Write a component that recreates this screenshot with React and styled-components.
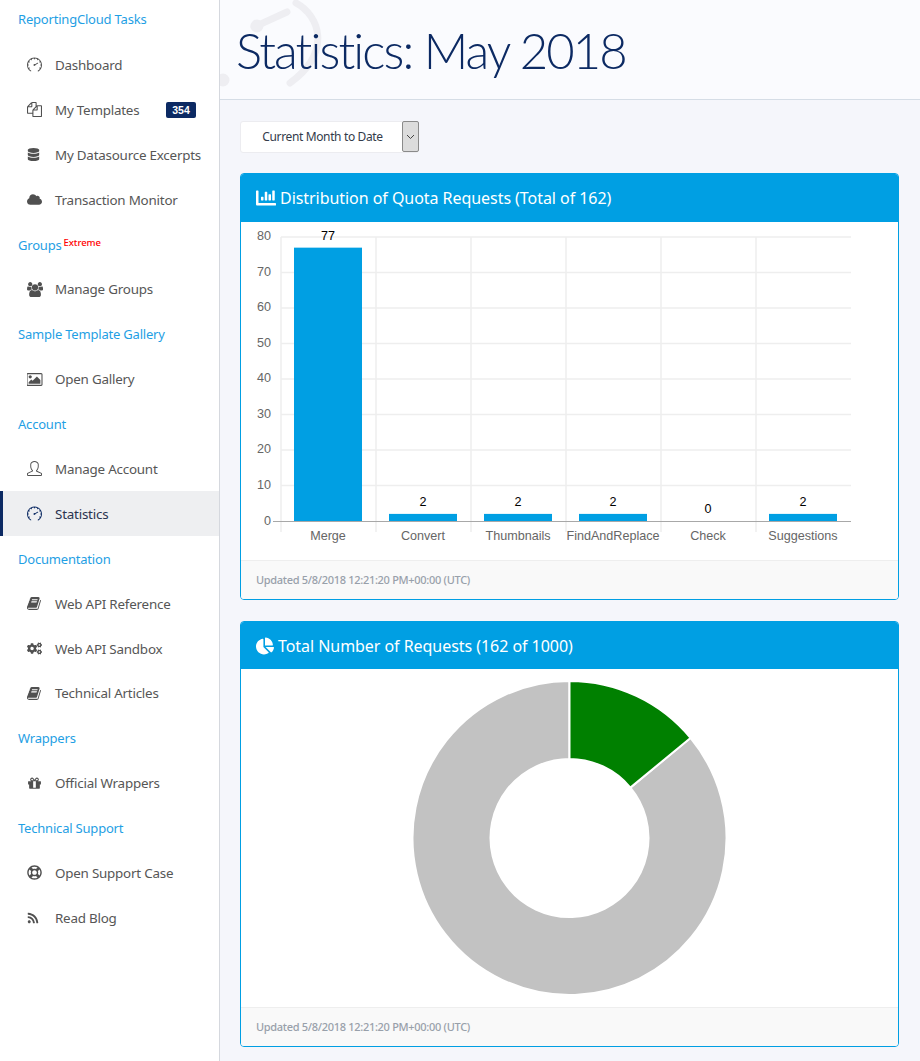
import React from "react";
import styled, { createGlobalStyle } from "styled-components";
import { FaChartBar, FaChartPie, FaCloud, FaCogs, FaDatabase, FaRegLifeRing, FaRss } from "react-icons/fa";
import { SlSpeedometer, SlUser } from "react-icons/sl";

const BODY_FONT = `"Noto Sans", "Open Sans", sans-serif`;
const CHART_FONT = `"Liberation Sans", Arial, sans-serif`;
const NAVY = "#0c2a63";
const BLUE = "#009fe3";

const GlobalStyle = createGlobalStyle`
  html, body { margin: 0; padding: 0; background: #f5f6fb; }
  body { font-family: ${BODY_FONT}; }
  * { box-sizing: border-box; }
`;

const Shell = styled.div`
  display: grid;
  grid-template-columns: 220px 1fr;
  width: 920px;
  height: 1061px;
  overflow: hidden;
`;

const Sidebar = styled.nav`
  background: #fff;
  border-right: 1px solid #d5d8de;
`;

const GroupTitle = styled.div`
  display: flex;
  align-items: center;
  height: 44.9px;
  padding-left: 18px;
  color: #1fa0e4;
  font-size: 13px;
  letter-spacing: -0.2px;
  &:first-child {
    height: 42.5px;
    padding-bottom: 4.5px;
  }
`;

const Extreme = styled.sup`
  align-self: flex-start;
  margin: 16px 0 0 2px;
  color: #ff0000;
  font-size: 9.5px;
  font-weight: 500;
  line-height: 1;
  letter-spacing: -0.05px;
`;

const NavRow = styled.a`
  display: flex;
  align-items: center;
  height: 44.9px;
  padding-left: ${(p) => (p.$active ? "24px" : "27px")};
  border-left: ${(p) => (p.$active ? `3px solid ${NAVY}` : "none")};
  background: ${(p) => (p.$active ? "#eeeff1" : "transparent")};
  color: ${(p) => (p.$active ? "#2a3450" : "#565656")};
  font-size: 13.4px;
  letter-spacing: -0.22px;
`;

const NavIcon = styled.span`
  display: flex;
  justify-content: flex-start;
  width: 28px;
  flex: none;
  font-size: 15px;
  color: ${(p) => (p.$active ? NAVY : "#505050")};
`;

const Badge = styled.span`
  margin-left: auto;
  margin-right: 23px;
  width: 30px;
  height: 16px;
  border-radius: 2px;
  background: ${NAVY};
  color: #fff;
  font-family: ${CHART_FONT};
  font-size: 10.5px;
  font-weight: 700;
  line-height: 16px;
  text-align: center;
  letter-spacing: 0;
`;

const Main = styled.main`
  min-width: 0;
`;

const PageHeader = styled.header`
  position: relative;
  height: 100px;
  padding: 19px 0 0 16px;
  background: #fafbfe;
  border-bottom: 1px solid #d5dde6;
  overflow: hidden;
`;

const Watermark = styled.svg`
  position: absolute;
  left: 0;
  top: 0;
`;

const PageTitle = styled.h1`
  position: relative;
  margin: 0;
  color: ${NAVY};
  font-family: "Lato", ${BODY_FONT};
  font-size: 49px;
  font-weight: 300;
  line-height: 62px;
  letter-spacing: -1.9px;
`;

const Content = styled.div`
  display: flex;
  flex-direction: column;
  padding: 21px 20px 0;
`;

const Picker = styled.div`
  display: flex;
  align-items: center;
  align-self: flex-start;
  width: 179px;
  height: 32px;
  margin-bottom: 20px;
  background: #fff;
  border: 1px solid #ececf0;
  border-radius: 3px;
  color: #333b4a;
  font-size: 12px;
  letter-spacing: -0.37px;
`;

const PickerText = styled.span`
  flex: 1;
  padding: 0 0 2px 2px;
  text-align: center;
`;

const PickerArrow = styled.span`
  display: flex;
  align-items: center;
  justify-content: center;
  align-self: flex-start;
  width: 17px;
  height: 31px;
  margin: -1px -1px 0 0;
  background: #dcdcdc;
  border: 1px solid #8a8a8a;
  border-radius: 2px;
`;

const Card = styled.section`
  display: flex;
  flex-direction: column;
  width: 659px;
  height: ${(p) => p.$height}px;
  margin-bottom: 21px;
  background: #fff;
  border: 1px solid ${BLUE};
  border-radius: 4px;
  overflow: hidden;
`;

const CardHead = styled.h2`
  display: flex;
  align-items: center;
  gap: 4px;
  flex: none;
  height: ${(p) => p.$height}px;
  margin: 0;
  padding-left: 15px;
  background: ${BLUE};
  color: #fff;
  font-size: 16px;
  font-weight: 400;
  letter-spacing: -0.05px;
`;

const CardBody = styled.div`
  flex: 1;
  min-height: 0;
`;

const CardFoot = styled.footer`
  flex: none;
  height: 39px;
  padding-left: 15px;
  background: #f9f9f9;
  border-top: 1px solid #eeeeee;
  color: #98a0aa;
  font-size: 11px;
  font-weight: 500;
  line-height: 38px;
  letter-spacing: -0.3px;
`;

const Glyph = ({ d, w = 1792, size = 15 }) => (
  <svg width={(size * w) / 1792} height={size} viewBox={`0 0 ${w} 1792`} fill="currentColor">
    <path d={d} />
  </svg>
);

const BOOK = "M1639 478q40 57 18 129l-275 906q-19 64-76.5 107.5t-122.5 43.5h-923q-77 0-148.5-53.5t-99.5-131.5q-24-67-2-127 0-4 3-27t4-37q1-8-3-21.5t-3-19.5q2-11 8-21t16.5-23.5 16.5-23.5q23-38 45-91.5t30-91.5q3-10 .5-30t-.5-28q3-11 17-28t17-23q21-36 42-92t25-90q1-9-2.5-32t.5-28q4-13 22-30.5t22-22.5q19-26 42.5-84.5t27.5-96.5q1-8-3-25.5t-2-26.5q2-8 9-18t18-23 17-21q8-12 16.5-30.5t15-35 16-36 19.5-32 26.5-23.5 36-11.5 47.5 5.5l-1 3q38-9 51-9h761q74 0 114 56t18 130l-274 906q-36 119-71.5 153.5t-128.5 34.5h-869q-27 0-38 15-11 16-1 43 24 70 144 70h923q29 0 56-15.5t35-41.5l300-987q7-22 5-57 38 15 59 43zm-1064 2q-4 13 2 22.5t20 9.5h608q13 0 25.5-9.5t16.5-22.5l21-64q4-13-2-22.5t-20-9.5h-608q-13 0-25.5 9.5t-16.5 22.5zm-83 256q-4 13 2 22.5t20 9.5h608q13 0 25.5-9.5t16.5-22.5l21-64q4-13-2-22.5t-20-9.5h-608q-13 0-25.5 9.5t-16.5 22.5z";
const USERS = "M593 896q-162 5-265 128h-134q-82 0-138-40.5t-56-118.5q0-353 124-353 6 0 43.5 21t97.5 42.5 119 21.5q67 0 133-23-5 37-5 66 0 139 81 256zm1071 637q0 120-73 189.5t-194 69.5h-874q-121 0-194-69.5t-73-189.5q0-53 3.5-103.5t14-109 26.5-108.5 43-97.5 62-81 85.5-53.5 111.5-20q10 0 43 21.5t73 48 107 48 135 21.5 135-21.5 107-48 73-48 43-21.5q61 0 111.5 20t85.5 53.5 62 81 43 97.5 26.5 108.5 14 109 3.5 103.5zm-1024-1277q0 106-75 181t-181 75-181-75-75-181 75-181 181-75 181 75 75 181zm704 384q0 159-112.5 271.5t-271.5 112.5-271.5-112.5-112.5-271.5 112.5-271.5 271.5-112.5 271.5 112.5 112.5 271.5zm576 225q0 78-56 118.5t-138 40.5h-134q-103-123-265-128 81-117 81-256 0-29-5-66 66 23 133 23 59 0 119-21.5t97.5-42.5 43.5-21q124 0 124 353zm-128-609q0 106-75 181t-181 75-181-75-75-181 75-181 181-75 181 75 75 181z";
const GIFT = "M1056 1356v-716h-320v716q0 25 18 38.5t46 13.5h192q28 0 46-13.5t18-38.5zm-456-844h195l-126-161q-26-31-69-31-40 0-68 28t-28 68 28 68 68 28zm688-96q0-40-28-68t-68-28q-43 0-69 31l-125 161h194q40 0 68-28t28-68zm376 256v320q0 14-9 23t-23 9h-96v416q0 40-28 68t-68 28h-1088q-40 0-68-28t-28-68v-416h-96q-14 0-23-9t-9-23v-320q0-14 9-23t23-9h440q-93 0-158.5-65.5t-65.5-158.5 65.5-158.5 158.5-65.5q107 0 168 77l128 165 128-165q61-77 168-77 93 0 158.5 65.5t65.5 158.5-65.5 158.5-158.5 65.5h440q14 0 23 9t9 23z";
const FILES = "M1696 384q40 0 68 28t28 68v1216q0 40-28 68t-68 28h-960q-40 0-68-28t-28-68v-288h-544q-40 0-68-28t-28-68v-672q0-40 20-88t48-76l408-408q28-28 76-48t88-20h416q40 0 68 28t28 68v328q68-40 128-40h416zm-544 213l-299 299h299v-299zm-640-384l-299 299h299v-299zm196 647l316-316v-416h-384v416q0 40-28 68t-68 28h-416v640h512v-256q0-40 20-88t48-76zm956 804v-1152h-384v416q0 40-28 68t-68 28h-416v640h896z";
const PICTURE = "M576 576q0 80-56 136t-136 56-136-56-56-136 56-136 136-56 136 56 56 136zm1024 384v448h-1408v-192l320-320 160 160 512-512zm96-704h-1600q-13 0-22.5 9.5t-9.5 22.5v1216q0 13 9.5 22.5t22.5 9.5h1600q13 0 22.5-9.5t9.5-22.5v-1216q0-13-9.5-22.5t-22.5-9.5zm160 32v1216q0 66-47 113t-113 47h-1600q-66 0-113-47t-47-113v-1216q0-66 47-113t113-47h1600q66 0 113 47t47 113z";

const menu = [
  { title: "ReportingCloud Tasks" },
  { label: "Dashboard", icon: <SlSpeedometer /> },
  { label: "My Templates", icon: <Glyph d={FILES} />, badge: "354" },
  { label: "My Datasource Excerpts", icon: <FaDatabase size={13} /> },
  { label: "Transaction Monitor", icon: <FaCloud size={15} /> },
  { title: "Groups", extreme: true },
  { label: "Manage Groups", icon: <Glyph d={USERS} w={1920} size={15} /> },
  { title: "Sample Template Gallery" },
  { label: "Open Gallery", icon: <Glyph d={PICTURE} w={1920} size={15} /> },
  { title: "Account" },
  { label: "Manage Account", icon: <SlUser /> },
  { label: "Statistics", icon: <SlSpeedometer />, active: true },
  { title: "Documentation" },
  { label: "Web API Reference", icon: <Glyph d={BOOK} /> },
  { label: "Web API Sandbox", icon: <FaCogs size={15} /> },
  { label: "Technical Articles", icon: <Glyph d={BOOK} /> },
  { title: "Wrappers" },
  { label: "Official Wrappers", icon: <Glyph d={GIFT} /> },
  { title: "Technical Support" },
  { label: "Open Support Case", icon: <FaRegLifeRing size={15} /> },
  { label: "Read Blog", icon: <FaRss size={12} /> },
];

const bars = [
  { name: "Merge", value: 77 },
  { name: "Convert", value: 2 },
  { name: "Thumbnails", value: 2 },
  { name: "FindAndReplace", value: 2 },
  { name: "Check", value: 0 },
  { name: "Suggestions", value: 2 },
];

const BarChart = () => {
  const step = 35.5;
  const yFor = (v) => 299 - (v / 10) * step;
  return (
    <svg width="657" height="338" fontFamily={CHART_FONT} style={{ display: "block" }}>
      {[80, 70, 60, 50, 40, 30, 20, 10].map((v) => (
        <g key={v}>
          <line x1="40" x2="610" y1={yFor(v)} y2={yFor(v)} stroke="#eeeeee" strokeWidth="1.5" />
          <text x="30" y={yFor(v) + 3} textAnchor="end" fontSize="12.6" fill="#666">{v}</text>
        </g>
      ))}
      {bars.map((b, i) => (
        <line key={b.name} x1={40 + i * 95} x2={40 + i * 95} y1="15" y2="310" stroke="#eeeeee" strokeWidth="1.5" />
      ))}
      <line x1="32" x2="610" y1="299.5" y2="299.5" stroke="#a8a8a8" />
      <text x="30" y="303" textAnchor="end" fontSize="12.6" fill="#666">0</text>
      {bars.map((b, i) => {
        const x = 53 + i * 95;
        const h = b.value * 3.55;
        return (
          <g key={b.name}>
            {b.value > 0 && <rect x={x} y={299 - h} width="68" height={h} fill={BLUE} />}
            <text x={x + 34} y={299 - h - 8} textAnchor="middle" fontSize="12.6" fill="#000">{b.value}</text>
            <text x={x + 34} y="318" textAnchor="middle" fontSize="12.6" fill="#666">{b.name}</text>
          </g>
        );
      })}
    </svg>
  );
};

const donutSlice = (cx, cy, r, rInner, from, to) => {
  const pt = (radius, a) => [cx + radius * Math.sin(a), cy - radius * Math.cos(a)];
  const [x1, y1] = pt(r, from);
  const [x2, y2] = pt(r, to);
  const [x3, y3] = pt(rInner, to);
  const [x4, y4] = pt(rInner, from);
  const large = to - from > Math.PI ? 1 : 0;
  return `M${x1} ${y1}A${r} ${r} 0 ${large} 1 ${x2} ${y2}L${x3} ${y3}A${rInner} ${rInner} 0 ${large} 0 ${x4} ${y4}Z`;
};

const Donut = () => {
  const used = 0.14 * Math.PI * 2;
  return (
    <svg width="657" height="337" style={{ display: "block" }}>
      <path d={donutSlice(328.5, 169, 157, 79, used, Math.PI * 2 - 0.0001)} fill="#c2c2c2" stroke="#fff" strokeWidth="2" />
      <path d={donutSlice(328.5, 169, 157, 79, 0, used)} fill="#008000" stroke="#fff" strokeWidth="2" />
    </svg>
  );
};

export default function App() {
  return (
    <>
      <GlobalStyle />
      <Shell>
        <Sidebar>
          {menu.map((m) =>
            m.title ? (
              <GroupTitle key={m.title}>
                {m.title}
                {m.extreme && <Extreme>Extreme</Extreme>}
              </GroupTitle>
            ) : (
              <NavRow key={m.label} $active={m.active}>
                <NavIcon $active={m.active}>{m.icon}</NavIcon>
                {m.label}
                {m.badge && <Badge>{m.badge}</Badge>}
              </NavRow>
            )
          )}
        </Sidebar>
        <Main>
          <PageHeader>
            <Watermark width="130" height="100" fill="none" stroke="#eeeef2" strokeWidth="7" strokeLinecap="round">
              <path d="M76 3 C 100 16 112 52 70 83" />
              <path d="M34 27 L67 12" />
              <circle cx="37" cy="26" r="3" fill="#eeeef2" />
              <circle cx="3" cy="80" r="3" fill="#eeeef2" />
            </Watermark>
            <PageTitle>Statistics: May 2018</PageTitle>
          </PageHeader>
          <Content>
            <Picker>
              <PickerText>Current Month to Date</PickerText>
              <PickerArrow>
                <svg width="9" height="6" viewBox="0 0 9 6" fill="none" stroke="#444" strokeWidth="1">
                  <path d="M1 1l3.5 3.5L8 1" />
                </svg>
              </PickerArrow>
            </Picker>
            <Card $height={427}>
              <CardHead $height={48}>
                <FaChartBar size={20} />
                Distribution of Quota Requests (Total of 162)
              </CardHead>
              <CardBody>
                <BarChart />
              </CardBody>
              <CardFoot>Updated 5/8/2018 12:21:20 PM+00:00 (UTC)</CardFoot>
            </Card>
            <Card $height={426}>
              <CardHead $height={47}>
                <FaChartPie size={18} />
                Total Number of Requests (162 of 1000)
              </CardHead>
              <CardBody>
                <Donut />
              </CardBody>
              <CardFoot>Updated 5/8/2018 12:21:20 PM+00:00 (UTC)</CardFoot>
            </Card>
          </Content>
        </Main>
      </Shell>
    </>
  );
}
